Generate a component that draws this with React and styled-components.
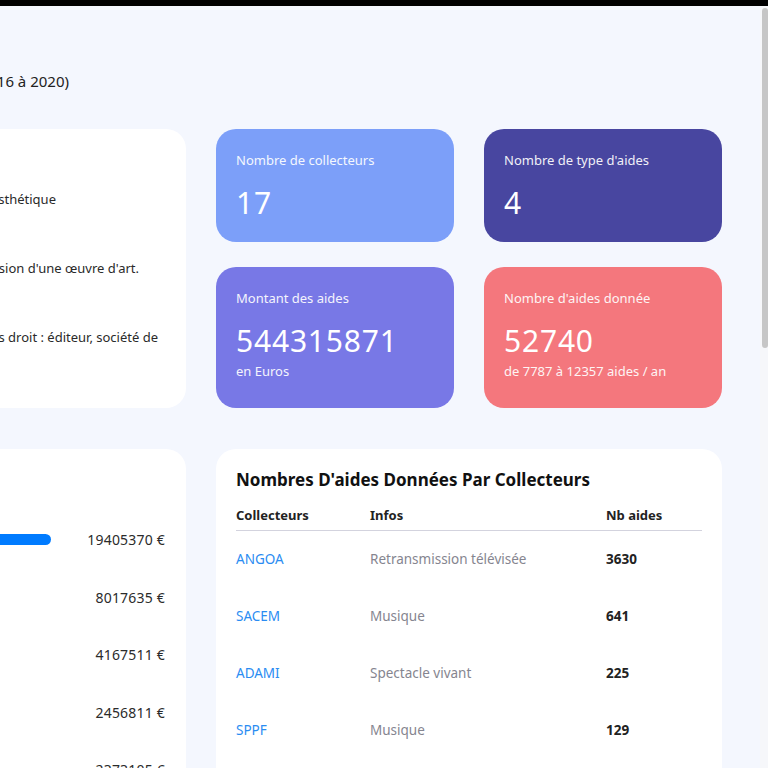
import React from 'react';
import styled, { createGlobalStyle } from 'styled-components';

const GlobalStyle = createGlobalStyle`
  html, body {
    margin: 0;
    padding: 0;
    background: #f4f7fe;
    font-family: 'Noto Sans', 'Lato', sans-serif;
    color: #222;
  }
  * { box-sizing: border-box; }
`;

const Frame = styled.div`
  position: relative;
  width: 768px;
  height: 768px;
  overflow: hidden;
  background: #f4f7fe;
`;

const TopBar = styled.div`
  height: 6px;
  background: #000;
`;

const Sheet = styled.main`
  margin-left: -250px;
  padding: 0 0 40px 36px;
  width: 1300px;
`;

const PageTitle = styled.h1`
  display: flex;
  justify-content: flex-end;
  width: 400px;
  margin: 0;
  padding: 58px 117px 0 0;
  height: 123px;
  font-size: 15px;
  line-height: 34px;
  font-weight: 400;
  white-space: nowrap;
  color: #222;
`;

const TopGrid = styled.section`
  display: grid;
  grid-template-columns: 400px 238px 238px;
  grid-template-rows: auto auto;
  column-gap: 30px;
  row-gap: 25px;
`;

const BottomGrid = styled.section`
  display: grid;
  grid-template-columns: 400px 506px;
  column-gap: 30px;
  margin-top: 41px;
  align-items: start;
`;

const Card = styled.div`
  background: #fff;
  border-radius: 20px;
  padding: 22px 20px;
`;

const LexiconCard = styled(Card)`
  grid-row: 1 / span 2;
  padding-right: 28px;
`;

const CardTitle = styled.h2`
  margin: 0;
  font-size: 17px;
  line-height: 24px;
  font-weight: 700;
  color: #111;
`;

const DefList = styled.div`
  display: flex;
  flex-direction: column;
  gap: 49px;
  margin-top: 14px;
`;

const DefLine = styled.p`
  display: flex;
  justify-content: flex-end;
  margin: 0;
  padding-right: ${p => p.$inset || 0}px;
  font-size: 13px;
  line-height: 20px;
  white-space: nowrap;
  color: #2a2a2a;
`;

const StatCard = styled.div`
  border-radius: 20px;
  padding: 22px 20px 21px;
  background: ${p => p.$bg};
  color: #fff;
`;

const StatLabel = styled.div`
  font-size: 13px;
  line-height: 18px;
  opacity: 0.92;
`;

const StatValue = styled.div`
  margin-top: 16px;
  font-size: 30px;
  line-height: 36px;
  font-weight: 400;
  letter-spacing: 0.8px;
`;

const StatSub = styled.div`
  margin-top: 3px;
  margin-bottom: 7px;
  font-size: 13px;
  line-height: 18px;
  opacity: 0.92;
`;

const ChartCard = styled(Card)`
  padding-right: 21px;
  min-height: 360px;
`;

const ChartRows = styled.div`
  margin-top: 16px;
`;

const ChartRow = styled.div`
  display: grid;
  grid-template-columns: 1fr 114px;
  align-items: center;
  height: 57.5px;
`;

const Track = styled.div`
  height: 11px;
`;

const Bar = styled.div`
  height: 11px;
  border-radius: 6px;
  background: #007bff;
`;

const Amount = styled.div`
  text-align: right;
  font-size: 14px;
  letter-spacing: 0.2px;
  color: #2b2b2b;
`;

const TableCard = styled(Card)`
  padding: 19px 20px 20px;
  min-height: 360px;
`;

const Table = styled.table`
  width: 100%;
  margin-top: 14px;
  border-collapse: collapse;
  font-size: 13px;
`;

const Th = styled.th`
  width: ${p => p.$w}px;
  text-align: left;
  font-weight: 700;
  color: #222;
  line-height: 18px;
  padding: 0 0 6px;
  border-bottom: 1px solid #d3d3de;
`;

const Td = styled.td`
  height: 57px;
  padding: 0;
  font-size: 13.5px;
  vertical-align: middle;
`;

const Collector = styled.a`
  color: #2a8cf2;
  text-decoration: none;
`;

const Info = styled.span`
  color: #85858f;
`;

const Count = styled.span`
  font-weight: 700;
  color: #222;
`;

const Scrollbar = styled.div`
  position: absolute;
  top: 6px;
  right: 0;
  bottom: 0;
  width: 8px;
  background: #f6f7fa;
`;

const Thumb = styled.div`
  margin: 2px 0 0 2px;
  width: 6px;
  height: 340px;
  border-radius: 3px;
  background: #c6c6c6;
`;

const stats = [
  { label: 'Nombre de collecteurs', value: '17', bg: '#7c9ff9' },
  { label: "Nombre de type d'aides", value: '4', bg: '#4846a0' },
  { label: 'Montant des aides', value: '544315871', sub: 'en Euros', bg: '#7878e6' },
  { label: "Nombre d'aides donnée", value: '52740', sub: 'de 7787 à 12357 aides / an', bg: '#f4777d' },
];

const definitions = [
  { text: "Aide à la création : soutien à une démarche esthétique", inset: 102 },
  { text: "Aide à la diffusion : soutien à la diffusion d'une œuvre d'art.", inset: 19 },
  { text: "Ayants droit : titulaires de droits, ayants droit : éditeur, société de", inset: 0 },
];

const amounts = [19405370, 8017635, 4167511, 2456811, 2373105];

const collectors = [
  { name: 'ANGOA', info: 'Retransmission télévisée', nb: 3630 },
  { name: 'SACEM', info: 'Musique', nb: 641 },
  { name: 'ADAMI', info: 'Spectacle vivant', nb: 225 },
  { name: 'SPPF', info: 'Musique', nb: 129 },
];

export default function App() {
  const max = amounts[0];
  return (
    <>
      <GlobalStyle />
      <Frame>
        <TopBar />
        <Sheet>
          <PageTitle>Aides des collecteurs (2016 à 2020)</PageTitle>
          <TopGrid>
            <LexiconCard>
              <CardTitle>Lexique</CardTitle>
              <DefList>
                {definitions.map(d => (
                  <DefLine key={d.text} $inset={d.inset}>{d.text}</DefLine>
                ))}
              </DefList>
            </LexiconCard>
            {stats.map(s => (
              <StatCard key={s.label} $bg={s.bg}>
                <StatLabel>{s.label}</StatLabel>
                <StatValue>{s.value}</StatValue>
                {s.sub && <StatSub>{s.sub}</StatSub>}
              </StatCard>
            ))}
          </TopGrid>
          <BottomGrid>
            <ChartCard>
              <CardTitle>Montant des aides</CardTitle>
              <ChartRows>
                {amounts.map(a => (
                  <ChartRow key={a}>
                    <Track>
                      <Bar style={{ width: `${(a / max) * 100}%` }} />
                    </Track>
                    <Amount>{a} €</Amount>
                  </ChartRow>
                ))}
              </ChartRows>
            </ChartCard>
            <TableCard>
              <CardTitle>Nombres D'aides Données Par Collecteurs</CardTitle>
              <Table>
                <thead>
                  <tr>
                    <Th $w={134}>Collecteurs</Th>
                    <Th $w={236}>Infos</Th>
                    <Th $w={96}>Nb aides</Th>
                  </tr>
                </thead>
                <tbody>
                  {collectors.map(c => (
                    <tr key={c.name}>
                      <Td><Collector href="#">{c.name}</Collector></Td>
                      <Td><Info>{c.info}</Info></Td>
                      <Td><Count>{c.nb}</Count></Td>
                    </tr>
                  ))}
                </tbody>
              </Table>
            </TableCard>
          </BottomGrid>
        </Sheet>
        <Scrollbar>
          <Thumb />
        </Scrollbar>
      </Frame>
    </>
  );
}
